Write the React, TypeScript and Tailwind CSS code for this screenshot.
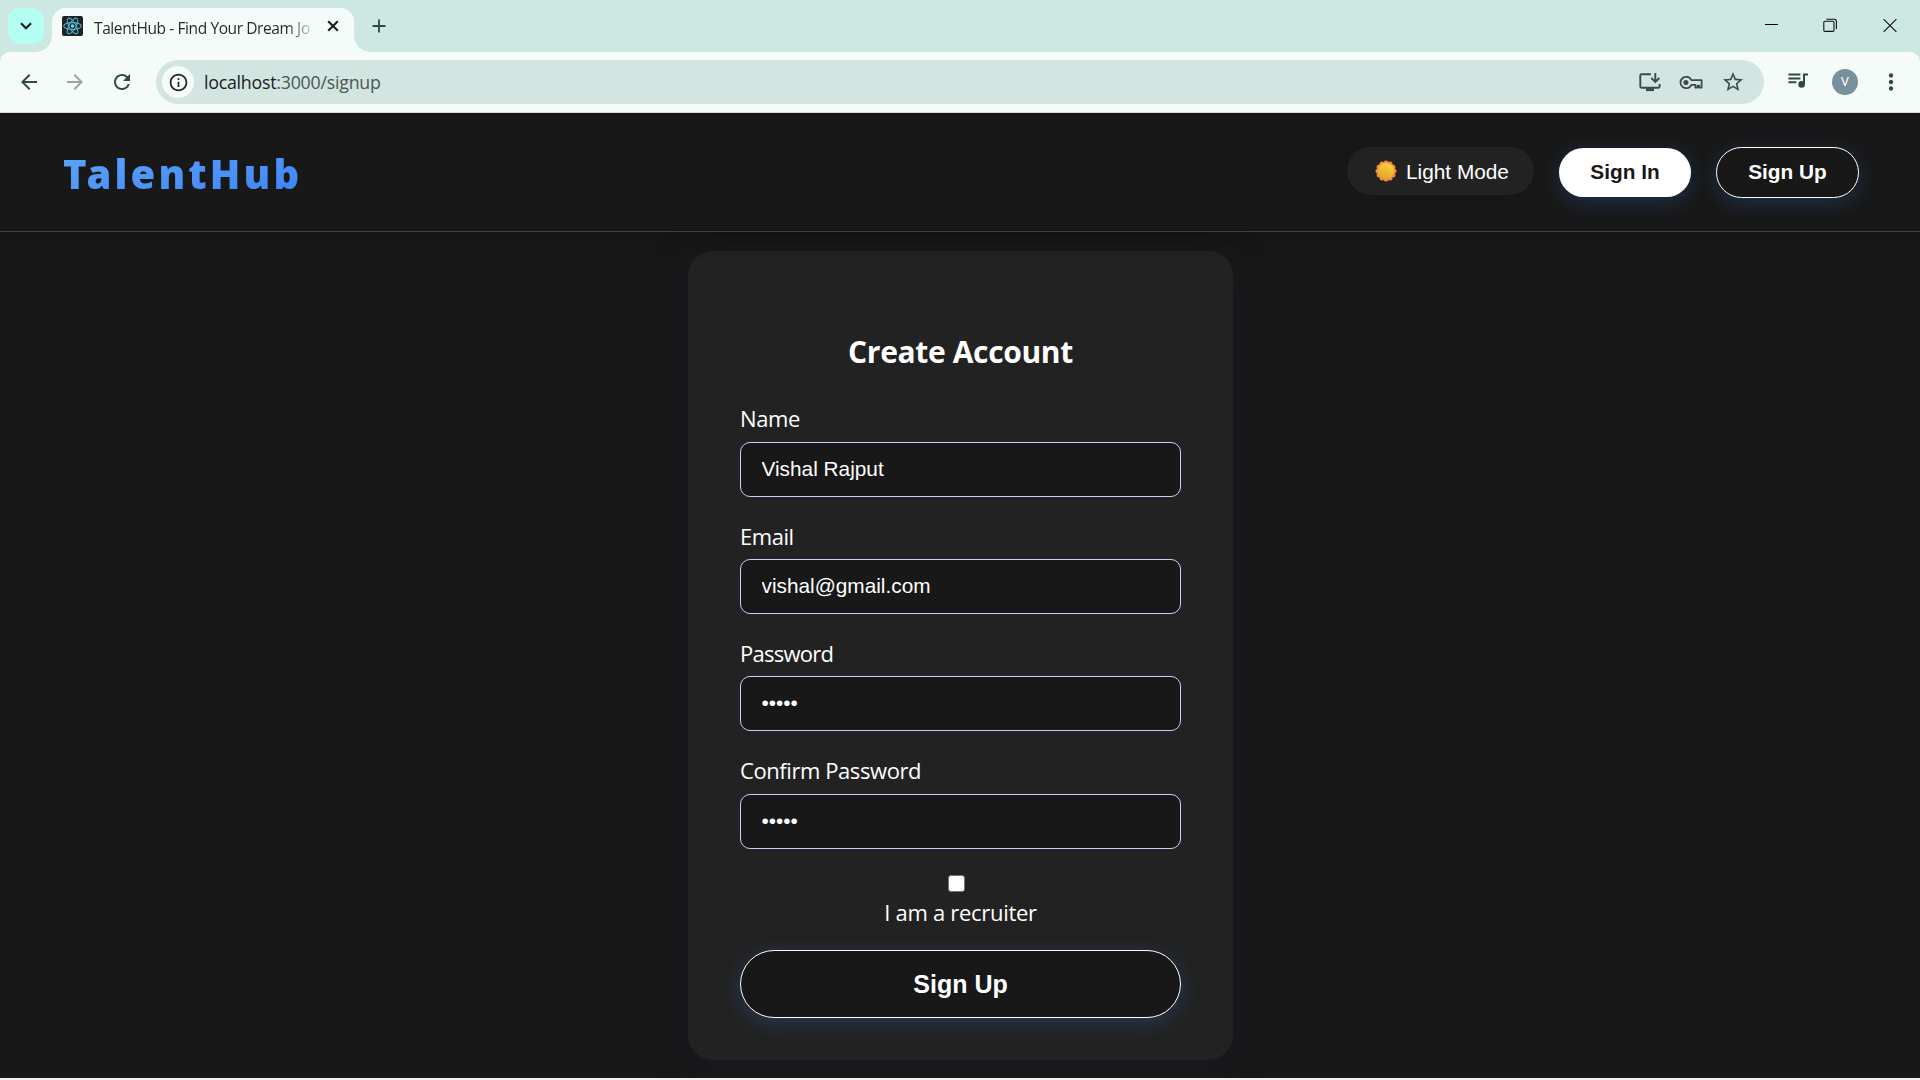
import React from "react";
import {
  MdAdd,
  MdArrowBack,
  MdArrowForward,
  MdMoreVert,
  MdOutlineInfo,
  MdRefresh,
  MdStarOutline,
} from "react-icons/md";

function ReactFavicon() {
  return (
    <svg viewBox="0 0 21 20" className="h-5 w-[21px]">
      <rect width="21" height="20" rx="2" fill="#202124" />
      <g fill="none" stroke="#4fb3cb" strokeWidth="1.1">
        <ellipse cx="10.5" cy="10" rx="8.8" ry="3.4" />
        <ellipse cx="10.5" cy="10" rx="8.8" ry="3.4" transform="rotate(60 10.5 10)" />
        <ellipse cx="10.5" cy="10" rx="8.8" ry="3.4" transform="rotate(120 10.5 10)" />
      </g>
      <circle cx="10.5" cy="10" r="1.8" fill="#61dafb" />
    </svg>
  );
}

function InstallIcon() {
  return (
    <svg viewBox="0 0 22 19" className="h-[19px] w-[22px]" fill="none" stroke="#3f4b49" strokeWidth="1.9">
      <path d="M12 1.3H2.4Q1.3 1.3 1.3 2.4V13.6Q1.3 14.7 2.4 14.7H19.4Q20.6 14.7 20.6 13.5V11" />
      <path d="M16.3 0V8.6M12.3 5L16.3 9L20.3 5" />
      <path d="M7 16.6H15" strokeWidth="3" />
    </svg>
  );
}

function KeyIcon() {
  return (
    <svg viewBox="0 0 24 15" className="h-[15px] w-6" fill="none" stroke="#3f4b49" strokeWidth="1.8">
      <path d="M12.4 5.2A5.7 5.7 0 1 0 12.4 9.8H16.4V12.6H18.6V10.6H20.2V12.6H22.6V5.2Z" strokeLinejoin="round" />
      <circle cx="6.9" cy="7.5" r="2.5" fill="#3f4b49" stroke="none" />
    </svg>
  );
}

function MediaIcon() {
  return (
    <svg viewBox="0 0 20 16" className="h-4 w-5" fill="none" stroke="#2f4a45" strokeWidth="2">
      <path d="M0.4 1.5H12.4M0.4 5.4H12.4M0.4 9.3H8.4" />
      <path d="M16 11.5V1.5H20" />
      <circle cx="13.6" cy="11.4" r="3.3" fill="#2f4a45" stroke="none" />
    </svg>
  );
}

function SunIcon() {
  const petals = Array.from({ length: 12 }, (_, i) => (i * Math.PI) / 6);
  return (
    <svg viewBox="0 0 22 22" className="h-[22px] w-[22px]">
      <defs>
        <linearGradient id="sun" x1="0.7" y1="0" x2="0.3" y2="1">
          <stop offset="0" stopColor="#fdd33c" />
          <stop offset="1" stopColor="#dfa32c" />
        </linearGradient>
      </defs>
      {petals.map((a) => (
        <circle key={a} cx={11 + 8 * Math.cos(a)} cy={11 + 8 * Math.sin(a)} r="2.5" fill="#f28b34" />
      ))}
      <circle cx="11" cy="11" r="8" fill="url(#sun)" />
    </svg>
  );
}

function BrowserChrome() {
  return (
    <div className="shrink-0 bg-[#cde8e2] font-['Open_Sans',sans-serif]">
      <div className="flex h-[52px] items-end">
        <div className="flex h-[52px] w-9 items-start pt-2 pl-2">
          <button className="flex size-9 shrink-0 items-center justify-center rounded-xl bg-[#b3fff3]">
            <svg viewBox="0 0 12 8" className="h-2 w-3" fill="none" stroke="#15201e" strokeWidth="2.2">
              <path d="M1 1.2L6 6.2L11 1.2" />
            </svg>
          </button>
        </div>
        <div className="size-4">
          <div className="size-4 bg-[radial-gradient(circle_at_0_0,transparent_15.5px,#f5fbf9_16px)]" />
        </div>
        <div className="flex h-11 w-[302px] items-center rounded-t-[14px] bg-[#f5fbf9] pl-[10px]">
          <div className="-mt-2">
            <ReactFavicon />
          </div>
          <div className="ml-[11px] w-[219px] bg-linear-to-r from-[#1f2a28] from-88% to-[#1f2a2820] bg-clip-text pb-[4px] text-[15.5px] leading-5 tracking-[-0.4px] whitespace-nowrap text-transparent">
            TalentHub - Find Your Dream Jo
          </div>
          <svg viewBox="0 0 12 12" className="mt-[-8px] ml-[14px] size-3" stroke="#15201e" strokeWidth="2.1">
            <path d="M1.2 1.2L10.8 10.8M10.8 1.2L1.2 10.8" />
          </svg>
        </div>
        <div className="size-4 bg-[radial-gradient(circle_at_100%_0,transparent_15.5px,#f5fbf9_16px)]" />
        <MdAdd className="mb-[15px] ml-[-2px] size-[22px] text-[#2f4a45]" />
        <div className="ml-auto flex h-[52px] items-start pt-[18px]">
          <svg viewBox="0 0 13 14" className="mr-[45px] h-[14px] w-[13px]">
            <path d="M0 6.5H13" stroke="#000" strokeWidth="1" />
          </svg>
          <svg viewBox="0 0 15 15" className="mr-[45px] size-[15px]" fill="none" stroke="#111" strokeWidth="1.1">
            <rect x="0.8" y="3.2" width="10.2" height="10.2" rx="1.2" />
            <path d="M3.4 1.2H11.2Q13.4 1.2 13.4 3.4V11" />
          </svg>
          <svg viewBox="0 0 14 14" className="mr-[23px] size-[14px]" stroke="#111" strokeWidth="1.1">
            <path d="M0.6 1.1L13.4 13.9M13.4 1.1L0.6 13.9" />
          </svg>
        </div>
      </div>
      <div className="flex h-[60px] items-center rounded-t-[10px] bg-[#f5fbf9]">
        <MdArrowBack className="ml-[17px] size-[24px] text-[#2f4a45]" />
        <MdArrowForward className="ml-[22px] size-[24px] text-[#9da5a3]" />
        <MdRefresh className="ml-[23px] size-[24px] text-[#2f4a45]" />
        <div className="ml-[22px] flex h-11 w-[1108px] flex-1 items-center rounded-full bg-[#d2e5e0] pl-1.5">
          <div className="flex h-8 w-8 items-center justify-center rounded-full bg-[#f5fbf9]">
            <MdOutlineInfo className="size-[21px] text-[#1c2725]" />
          </div>
          <div className="ml-[10px] text-[17.8px] tracking-[-0.24px] text-[#4c5654]">
            <span className="text-[#18211f]">localhost</span>:3000/signup
          </div>
          <div className="mr-[19px] ml-auto flex items-center">
            <InstallIcon />
            <div className="ml-[18px]">
              <KeyIcon />
            </div>
            <MdStarOutline className="ml-[18px] size-[24px] text-[#3f4b49]" />
          </div>
        </div>
        <div className="-mt-[3px] ml-[24px]">
          <MediaIcon />
        </div>
        <div className="ml-6 flex size-[26px] items-center justify-center rounded-full bg-[#78909c] font-['Roboto',sans-serif] text-[13px] text-white">
          V
        </div>
        <MdMoreVert className="mr-[16px] ml-[20px] size-[26px] text-[#2f4a45]" />
      </div>
      <div className="h-px bg-[#cde0dc]" />
    </div>
  );
}

function Field({ label, value, type, spacing }: { label: string; value: string; type: string; spacing: string }) {
  return (
    <label className="flex h-[117px] w-full flex-col">
      <span className={`h-[39px] text-[22px] leading-[30px] ${spacing}`}>{label}</span>
      <input
        type={type}
        defaultValue={value}
        className="h-[55px] w-full rounded-[10px] border border-[#c3cfff] bg-[#181818] px-[20.5px] pb-px font-['Liberation_Sans',Arial,sans-serif] text-[20.8px] text-white outline-none"
      />
    </label>
  );
}

const glow = "shadow-[0_5px_20px_rgba(59,130,246,0.22)]";

export default function App() {
  return (
    <div className="flex h-[1080px] w-[1920px] flex-col overflow-hidden bg-[#f3f3f3]">
      <BrowserChrome />
      <div className="flex h-[965px] flex-col overflow-hidden bg-[#181818] text-white">
        <header className="relative z-10 flex h-[119px] shrink-0 items-center border-b border-[#374151] pr-[61px] pl-[63px] shadow-[0_3px_20px_rgba(0,0,0,0.25)]">
          <div className="mt-[3px] bg-linear-to-br from-[#60a5fa] to-[#3b82f6] bg-clip-text font-['Noto_Sans',sans-serif] text-[40px] leading-[54px] font-black tracking-[3.1px] text-transparent">
            TalentHub
          </div>
          <nav className="ml-auto flex items-center font-['Liberation_Sans',Arial,sans-serif] text-[20.4px]">
            <button className="-mt-[2px] flex h-12 w-[187px] items-center rounded-full bg-[#222] pl-7 text-[20.8px] shadow-[0_2px_10px_rgba(0,0,0,0.12)]">
              <SunIcon />
              <span className="ml-[9px] pt-px whitespace-nowrap">Light Mode</span>
            </button>
            <button className={`ml-[25px] h-[49px] w-[132px] rounded-full bg-white text-[20.8px] font-bold text-[#181818] ${glow}`}>
              Sign In
            </button>
            <button className={`ml-[25px] h-[51px] w-[143px] rounded-full border border-white bg-[#181818] text-[20.8px] font-bold ${glow}`}>
              Sign Up
            </button>
          </nav>
        </header>
        <main className="mt-[19px] ml-[688px] flex h-[809px] w-[545px] shrink-0 flex-col items-center rounded-[25px] bg-[#222] px-[52px] pt-[81px] font-['Open_Sans',sans-serif] shadow-[0_10px_40px_rgba(30,30,60,0.3)]">
          <h1 className="h-[71px] text-[30px] leading-10 font-bold tracking-[-0.35px]">Create Account</h1>
          <Field label="Name" value="Vishal Rajput" type="text" spacing="tracking-[-0.4px]" />
          <Field label="Email" value="vishal@gmail.com" type="email" spacing="tracking-[-0.45px] pt-px" />
          <Field label="Password" value="12345" type="password" spacing="tracking-[-0.75px] pt-px" />
          <div className="mt-px w-full">
            <Field label="Confirm Password" value="12345" type="password" spacing="tracking-[-0.42px]" />
          </div>
          <input
            type="checkbox"
            className="mt-[3px] mr-[8px] size-[17px] shrink-0 appearance-none rounded-[3px] border border-[#767676] bg-white"
          />
          <div className="mt-[5px] text-[22px] leading-[30px] tracking-[-0.3px]">I am a recruiter</div>
          <button className={`mt-[23px] h-[68px] w-full shrink-0 rounded-full border border-white bg-[#181818] pt-[2px] font-['Liberation_Sans',Arial,sans-serif] text-[25px] font-bold ${glow}`}>
            Sign Up
          </button>
        </main>
      </div>
    </div>
  );
}
